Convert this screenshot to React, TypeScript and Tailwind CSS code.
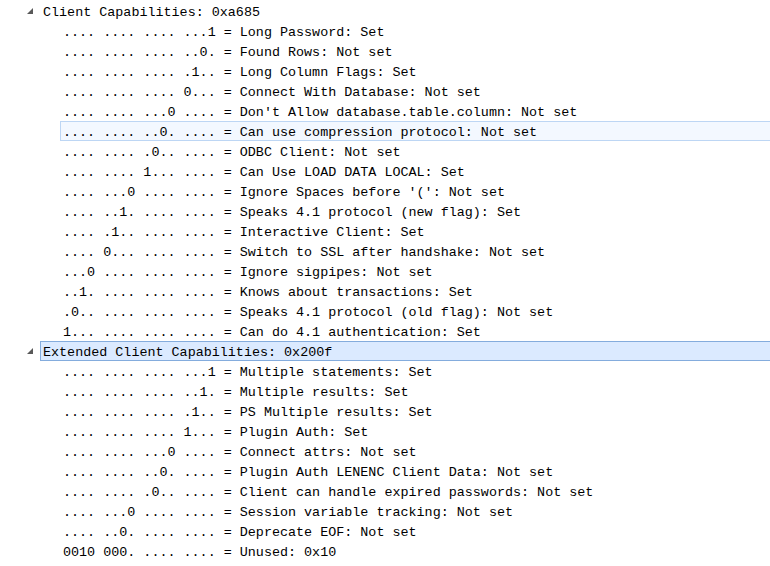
import React from "react";

type Group = {
  title: string;
  selected?: boolean;
  items: { text: string; hover?: boolean }[];
};

const groups: Group[] = [
  {
    title: "Client Capabilities: 0xa685",
    items: [
      { text: ".... .... .... ...1 = Long Password: Set" },
      { text: ".... .... .... ..0. = Found Rows: Not set" },
      { text: ".... .... .... .1.. = Long Column Flags: Set" },
      { text: ".... .... .... 0... = Connect With Database: Not set" },
      { text: ".... .... ...0 .... = Don't Allow database.table.column: Not set" },
      { text: ".... .... ..0. .... = Can use compression protocol: Not set", hover: true },
      { text: ".... .... .0.. .... = ODBC Client: Not set" },
      { text: ".... .... 1... .... = Can Use LOAD DATA LOCAL: Set" },
      { text: ".... ...0 .... .... = Ignore Spaces before '(': Not set" },
      { text: ".... ..1. .... .... = Speaks 4.1 protocol (new flag): Set" },
      { text: ".... .1.. .... .... = Interactive Client: Set" },
      { text: ".... 0... .... .... = Switch to SSL after handshake: Not set" },
      { text: "...0 .... .... .... = Ignore sigpipes: Not set" },
      { text: "..1. .... .... .... = Knows about transactions: Set" },
      { text: ".0.. .... .... .... = Speaks 4.1 protocol (old flag): Not set" },
      { text: "1... .... .... .... = Can do 4.1 authentication: Set" },
    ],
  },
  {
    title: "Extended Client Capabilities: 0x200f",
    selected: true,
    items: [
      { text: ".... .... .... ...1 = Multiple statements: Set" },
      { text: ".... .... .... ..1. = Multiple results: Set" },
      { text: ".... .... .... .1.. = PS Multiple results: Set" },
      { text: ".... .... .... 1... = Plugin Auth: Set" },
      { text: ".... .... ...0 .... = Connect attrs: Not set" },
      { text: ".... .... ..0. .... = Plugin Auth LENENC Client Data: Not set" },
      { text: ".... .... .0.. .... = Client can handle expired passwords: Not set" },
      { text: ".... ...0 .... .... = Session variable tracking: Not set" },
      { text: ".... ..0. .... .... = Deprecate EOF: Not set" },
      { text: "0010 000. .... .... = Unused: 0x10" },
    ],
  },
];

function Expander() {
  return (
    <svg width="7" height="7" viewBox="0 0 7 7" className="absolute left-[27px] top-[7px]">
      <polygon points="6,0 6,6 0,6" fill="#595959" />
    </svg>
  );
}

export default function App() {
  return (
    <div
      className="w-[770px] h-[566px] overflow-hidden bg-white pt-px text-black"
      style={{ fontFamily: '"Liberation Mono", monospace' }}
    >
      {groups.map((g) => (
        <div key={g.title}>
          <div className="relative h-[20px] pl-[40px]">
            <Expander />
            <div
              className={
                g.selected
                  ? "h-[20px] border border-r-0 border-[#84acdd] bg-[#dbeaff] pl-[2px] text-[13.4px] leading-[21px] whitespace-pre"
                  : "h-[20px] border border-transparent pl-[2px] text-[13.4px] leading-[21px] whitespace-pre"
              }
            >
              {g.title}
            </div>
          </div>
          {g.items.map((it) => (
            <div key={it.text} className="h-[20px] pl-[60px]">
              <div
                className={
                  it.hover
                    ? "h-[20px] border border-r-0 border-[#bdd6f4] bg-[#f3f8ff] pl-[2px] text-[13.4px] leading-[21px] whitespace-pre"
                    : "h-[20px] border border-transparent pl-[2px] text-[13.4px] leading-[21px] whitespace-pre"
                }
              >
                {it.text}
              </div>
            </div>
          ))}
        </div>
      ))}
    </div>
  );
}
